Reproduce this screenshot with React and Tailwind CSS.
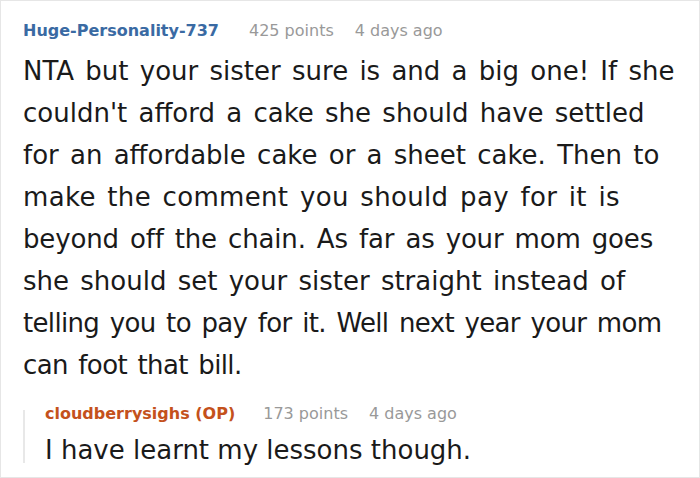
const lines = [
  ["NTA but your sister sure is and a big one! If she", ""],
  ["couldn't afford a cake she should have settled", ""],
  ["for an affordable cake or a sheet cake. Then to", ""],
  ["make the comment you should pay for it is", "tracking-[0.33px]"],
  ["beyond off the chain. As far as your mom goes", "tracking-[-0.16px]"],
  ["she should set your sister straight instead of", ""],
  ["telling you to pay for it. Well next year your mom", "tracking-[-0.67px]"],
  ["can foot that bill.", "tracking-[-0.65px]"],
];

export default function App() {
  return (
    <div className="w-[700px] h-[478px] bg-white border border-[#e6e6e6] overflow-hidden" style={{ fontFamily: '"DejaVu Sans", "Noto Sans", sans-serif' }}>
      <div className="pl-[22px] pt-[18px]">
        <div className="flex items-baseline text-[16px] leading-[24px] whitespace-nowrap">
          <span className="font-bold text-[#3a6aa3]">Huge-Personality-737</span>
          <span className="ml-[30px] text-[#999999]">425 points</span>
          <span className="ml-[21px] text-[#999999]">4 days ago</span>
        </div>
        <p className="mt-[7px] text-[26px] leading-[42px] text-[#1a1a1a] whitespace-nowrap [word-spacing:3px]">
          {lines.map(([l, c], i) => (
            <span key={i} className={"block " + c}>{l}</span>
          ))}
        </p>
        <div className="mt-[16px] flex">
          <div className="w-[2px] bg-[#e8e8e8] mt-[8px] mb-[8px]"></div>
          <div className="pl-[20px]">
            <div className="flex items-baseline text-[16px] leading-[24px] whitespace-nowrap">
              <span className="font-bold text-[#c4511c]">cloudberrysighs (OP)</span>
              <span className="ml-[28px] text-[#999999]">173 points</span>
              <span className="ml-[21px] text-[#999999]">4 days ago</span>
            </div>
            <p className="mt-[3px] text-[26px] leading-[42px] text-[#1a1a1a] whitespace-nowrap">I have learnt my lessons though.</p>
          </div>
        </div>
      </div>
    </div>
  );
}
